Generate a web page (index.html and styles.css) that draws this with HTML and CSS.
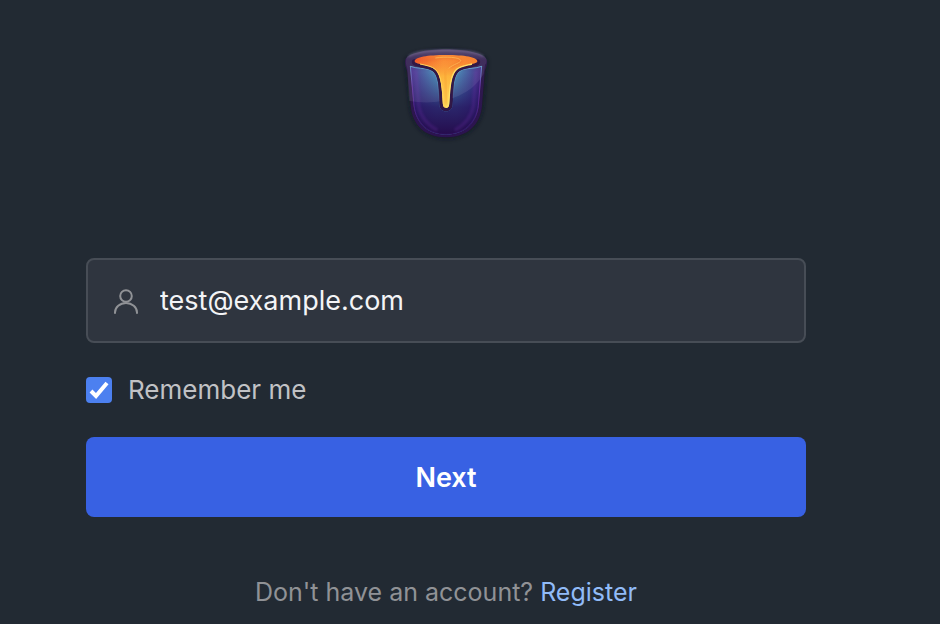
FILE: index.html
```html
<!DOCTYPE html>
<html lang="en">

<head>
    <meta charset="UTF-8">
    <meta name="viewport" content="width=device-width, initial-scale=1.0">
    <title>Login</title>
    <link rel="stylesheet" href="styles.css">
</head>

<body>
    <main class="login">
        <svg class="logo" viewBox="0 0 300 330" role="img" aria-label="Logo">
            <defs>
                <linearGradient id="rim" x1="0" y1="0" x2="0" y2="1">
                    <stop offset="0" stop-color="#4d4064" />
                    <stop offset=".12" stop-color="#301c4c" />
                    <stop offset="1" stop-color="#2b1250" />
                </linearGradient>
                <linearGradient id="glass" x1="0" y1="0" x2="1" y2="0">
                    <stop offset="0" stop-color="#49258a" />
                    <stop offset=".15" stop-color="#3f4d98" />
                    <stop offset=".36" stop-color="#3f87b3" />
                    <stop offset=".64" stop-color="#3f87b3" />
                    <stop offset=".85" stop-color="#3a4592" />
                    <stop offset="1" stop-color="#45207f" />
                </linearGradient>
                <linearGradient id="depth" x1="0" y1="0" x2="0" y2="1">
                    <stop offset=".1" stop-color="#251062" stop-opacity="0" />
                    <stop offset=".6" stop-color="#27155f" stop-opacity=".85" />
                    <stop offset="1" stop-color="#250c4c" />
                </linearGradient>
                <linearGradient id="edge" x1="0" y1="0" x2="0" y2="1">
                    <stop offset="0" stop-color="#5a8fc4" />
                    <stop offset=".3" stop-color="#6632a0" />
                    <stop offset="1" stop-color="#4b1983" stop-opacity=".3" />
                </linearGradient>
                <linearGradient id="lip" gradientUnits="userSpaceOnUse" x1="0" y1="84" x2="0" y2="190">
                    <stop offset="0" stop-color="#62b4d6" stop-opacity=".9" />
                    <stop offset="1" stop-color="#4a7fb0" stop-opacity="0" />
                </linearGradient>
                <linearGradient id="lava" x1="0" y1="0" x2="1" y2="0">
                    <stop offset="0" stop-color="#f1572a" />
                    <stop offset=".45" stop-color="#fb8f38" />
                    <stop offset="1" stop-color="#f7812f" />
                </linearGradient>
                <linearGradient id="drip" x1="0" y1="0" x2="0" y2="1">
                    <stop offset=".1" stop-color="#f99a38" stop-opacity="0" />
                    <stop offset=".4" stop-color="#fdb43c" />
                    <stop offset="1" stop-color="#ffd658" />
                </linearGradient>
                <filter id="shadow" x="-20%" y="-20%" width="140%" height="140%">
                    <feGaussianBlur stdDeviation="6" />
                </filter>
                <filter id="soft" x="-20%" y="-20%" width="140%" height="140%">
                    <feGaussianBlur stdDeviation="3" />
                </filter>
            </defs>
            <!-- bucket -->
            <path d="M27 70C35 23 265 23 274 70L262 205C256 264 214 303 150 303S48 264 41 205Z" fill="#111522" opacity=".7" filter="url(#shadow)" />
            <path d="M27 68C35 22 265 22 273 68C275 85 267 91 266 102L258 202C253 262 213 298 150 298S49 262 44 202L34 102C32 91 26 85 27 68Z" fill="url(#rim)" />
            <path d="M38 55C65 30 235 30 262 55" fill="none" stroke="#7c6f98" stroke-width="5" opacity=".6" filter="url(#soft)" />
            <path d="M42 83C62 91 85 89 100 94Q123 102 126 135L130 202C133 227 167 227 170 202L174 135Q177 102 200 94C218 89 238 91 258 83L248 202C242 258 205 290 150 290S60 258 53 202Z" fill="url(#glass)" />
            <path d="M42 83C62 91 85 89 100 94Q123 102 126 135L130 202C133 227 167 227 170 202L174 135Q177 102 200 94C218 89 238 91 258 83L248 202C242 258 205 290 150 290S60 258 53 202Z" fill="url(#depth)" />
            <path d="M43 84L54 202C60 256 99 289 150 289S241 256 247 202L257 84" fill="none" stroke="url(#edge)" stroke-width="3" />
            <path d="M60 98L68 205Q78 252 124 277M240 98L232 205Q222 252 176 277" fill="none" stroke="#6f2fa8" stroke-width="10" opacity=".25" filter="url(#soft)" />
            <path d="M43 85C62 92 85 90 100 95Q122 103 125 135L129 190M257 85C238 92 218 90 200 95Q178 103 175 135L171 190" fill="none" stroke="url(#lip)" stroke-width="3" />
            <!-- reflection -->
            <path d="M39 188C118 204 218 184 263 108L267 80Q278 68 266 55C230 30 70 30 34 55Q25 70 34 93Z" fill="#b8b5d8" opacity=".12" />
            <!-- gap between the lava and the glass -->
            <path d="M56 72C56 79 95 80 114 92C136 107 138 148 141 202C142 212 158 212 159 202C162 148 164 107 186 92C205 80 244 79 244 72" fill="none" stroke="#321846" stroke-width="17" stroke-linecap="round" />
            <!-- lava -->
            <path d="M56 70C56 57 95 51 150 51S244 57 244 70C244 79 205 80 186 92C164 107 162 148 159 202C158 212 142 212 141 202C138 148 136 107 114 92C95 80 56 79 56 70Z" fill="url(#lava)" />
            <path d="M56 70C56 57 95 51 150 51S244 57 244 70C244 79 205 80 186 92C164 107 162 148 159 202C158 212 142 212 141 202C138 148 136 107 114 92C95 80 56 79 56 70Z" fill="url(#drip)" />
            <path d="M84 70C110 60 175 54 193 66C200 74 178 77 164 90" fill="none" stroke="#e8692a" stroke-width="6" opacity=".5" filter="url(#soft)" />
            <path d="M118 60C150 55 192 58 194 67C195 75 172 78 158 91" fill="none" stroke="#ffc258" stroke-width="3" opacity=".7" />
            <path d="M147 100C150 130 151 165 150 198" fill="none" stroke="#f08a2c" stroke-width="4" opacity=".5" filter="url(#soft)" />
            <path d="M72 78C93 83 106 84 118 94C138 111 139 158 142 198Q144 207 150 208" fill="none" stroke="#ffd55c" stroke-width="3" />
            <path d="M228 78C207 83 194 84 182 94C162 111 161 158 158 198Q156 207 150 208" fill="none" stroke="#ffe068" stroke-width="4" />
        </svg>

        <form class="login-form">
            <div class="field">
                <svg class="user-icon" viewBox="0 0 28 28" aria-hidden="true">
                    <circle cx="14" cy="9" r="5.8" />
                    <path d="M3 26v-.5a11 9.5 0 0 1 22 0v.5" />
                </svg>
                <input class="field-input" type="email" value="test@example.com" aria-label="Email">
            </div>

            <label class="remember" for="remember">
                <input class="checkbox" type="checkbox" id="remember" checked>
                Remember me
            </label>

            <button class="btn" type="submit">Next</button>
        </form>

        <p class="register">Don't have an account? <a href="#">Register</a></p>
    </main>
</body>

</html>
```
FILE: styles.css
```css
* {
    margin: 0;
    padding: 0;
    box-sizing: border-box;
}

body {
    font-family: Inter, 'Liberation Sans', sans-serif;
    font-size: 25px;
    line-height: 32px;
    background-color: #222a33;
    color: #c1c2c5;
}

.login {
    display: flex;
    flex-direction: column;
    align-items: center;
    padding: 38px 134px 16px 86px;
}

.logo {
    width: 100px;
    height: 110px;
    margin-bottom: 110px;
}

.login-form {
    width: 100%;
    display: flex;
    flex-direction: column;
}

.field {
    display: flex;
    align-items: center;
    gap: 20px;
    padding: 24px;
    border: 2px solid #474d56;
    border-radius: 8px;
    background-color: #2f353f;
}

.user-icon {
    width: 28px;
    height: 28px;
    flex-shrink: 0;
    fill: none;
    stroke: #909296;
    stroke-width: 2;
    stroke-linecap: round;
}

.field-input {
    flex: 1;
    min-width: 0;
    height: 33px;
    border: none;
    outline: none;
    background: transparent;
    color: #f3f4f6;
    font-family: inherit;
    font-size: 27px;
}

.remember {
    display: flex;
    align-items: center;
    gap: 16px;
    margin: 31px 0;
    font-size: 26px;
}

.checkbox {
    appearance: none;
    width: 26px;
    height: 26px;
    border-radius: 4px;
    background-color: #4c80f0;
}

.checkbox:checked {
    background-image: url("data:image/svg+xml,%3Csvg xmlns='http://www.w3.org/2000/svg' viewBox='0 0 26 26'%3E%3Cpath d='M5 14l5 5L21 6' fill='none' stroke='white' stroke-width='4'/%3E%3C/svg%3E");
}

.btn {
    height: 80px;
    border: none;
    border-radius: 8px;
    background-color: #3861e3;
    color: #fff;
    font-family: inherit;
    font-size: 27px;
    font-weight: 600;
    cursor: pointer;
}

.register {
    margin-top: 59px;
    color: #909296;
}

.register a {
    color: #91bbf8;
    text-decoration: none;
}
```
